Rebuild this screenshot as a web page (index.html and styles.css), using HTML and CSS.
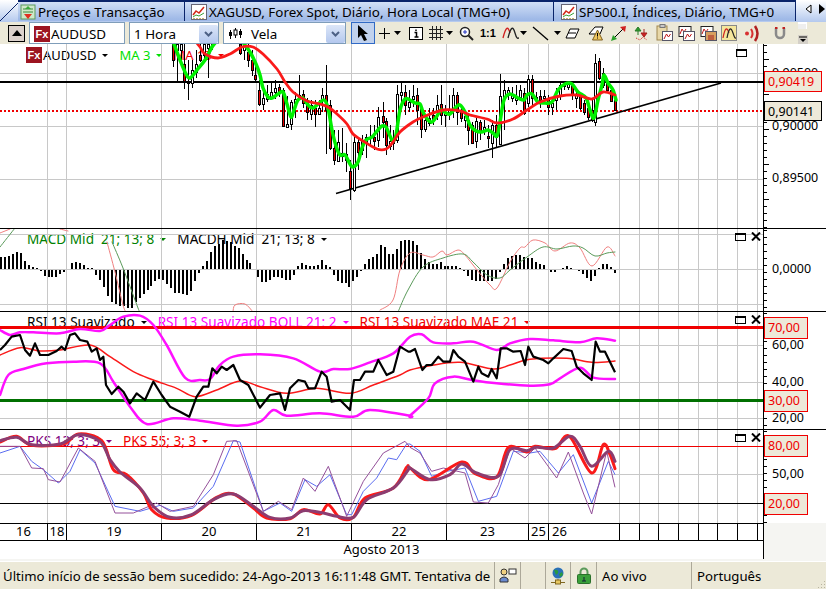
FILE: index.html
```html
<!DOCTYPE html>
<html lang="en">
<head>
  <meta charset="UTF-8">
  <title>AUDUSD</title>
  <link rel="stylesheet" href="styles.css">
</head>
<body>
  <!-- Tabs -->
  <div class="tabs">
    <svg class="tab-corner" width="19" height="22"><path d="M0 21 L19 2" stroke="#0a246a" fill="none"/></svg>
    <div class="tab tab-prices">
      <svg width="16" height="16" viewBox="0 0 16 16"><rect x="1" y="1" width="14" height="14" fill="#cfe8c8" stroke="#5c9a5c"/><path d="M3 5h10M3 8h10" stroke="#3c8c3c"/><path d="M8 2l3 3H5z" fill="#3cab3c"/><path d="M8 15l4-5H4z" fill="#e03020"/></svg>
      Preços e Transacção
    </div>
    <div class="tab tab-xag">
      <svg width="16" height="16" viewBox="0 0 16 16"><rect x="0.5" y="0.5" width="15" height="15" fill="#fff" stroke="#667"/><path d="M2 11l3-4 3 2 5-6" fill="none" stroke="#d02818" stroke-width="1.5"/><path d="M2 13l3-2 3 1 5-3" fill="none" stroke="#38a038"/><path d="M2 14.5h12" stroke="#c8b070" stroke-dasharray="2 1"/></svg>
      XAGUSD, Forex Spot, Diário, Hora Local (TMG+0)
    </div>
    <div class="tab tab-sp">
      <svg width="16" height="16" viewBox="0 0 16 16"><rect x="0.5" y="0.5" width="15" height="15" fill="#fff" stroke="#667"/><path d="M2 11l3-4 3 2 5-6" fill="none" stroke="#d02818" stroke-width="1.5"/><path d="M2 13l3-2 3 1 5-3" fill="none" stroke="#38a038"/><path d="M2 14.5h12" stroke="#c8b070" stroke-dasharray="2 1"/></svg>
      SP500.I, Índices, Diário, TMG+0
    </div>
    <div class="tab-arrows">
      <svg width="29" height="20" viewBox="0 0 29 20"><path d="M15 5v8l-5-4z" fill="#fff" stroke="#000"/><path d="M23 4l6 5-6 5z" fill="#000"/></svg>
    </div>
  </div>

  <!-- Toolbar -->
  <div class="toolbar">
    <button class="collapse"><svg width="10" height="6"><path d="M0 6L5 0l5 6z" fill="#000"/></svg></button>
    <div class="field symbol-field"><span class="fx">Fx</span>AUDUSD</div>
    <div class="field hour-field">1 Hora<span class="drop"><svg width="9" height="6"><path d="M1 1l3.5 3.5L8 1" fill="none" stroke="#4d6185" stroke-width="2"/></svg></span></div>
    <div class="field type-field">
      <svg width="16" height="12" viewBox="0 0 16 12"><path d="M2.5 2v9M7.5 0v10M12.5 1v9" stroke="#000"/><rect x="1" y="4" width="3" height="4" fill="#000"/><rect x="6" y="2" width="3" height="5" fill="#fff" stroke="#000"/><rect x="11" y="3" width="3" height="4" fill="#000"/></svg>
      <span class="type-label">Vela</span>
      <span class="drop"><svg width="9" height="6"><path d="M1 1l3.5 3.5L8 1" fill="none" stroke="#4d6185" stroke-width="2"/></svg></span>
    </div>
    <button class="tool-active"><svg width="14" height="18" viewBox="0 0 14 18"><path d="M2 1v13l3-3 3 6 3-1-3-6h4z" fill="#000"/></svg></button>
    <div class="tools">
      <svg class="plus" width="13" height="13"><path d="M6.5 1v11M1 6.5h11" stroke="#000"/></svg>
      <svg class="caret" width="7" height="4"><path d="M0 0h7L3.5 4z"/></svg>
      <svg class="info" width="14" height="13"><rect x=".5" y=".5" width="13" height="12" fill="#fff" stroke="#000"/><path d="M7 2.5v1.5M5.5 5.5H7.5v4.500M5.500 10h4" stroke="#000" stroke-width="1.5" fill="none"/></svg>
      <svg class="grid-icon" width="14" height="14"><path d="M3.5 0v14M7.5 0v14M11.5 0v14M0 3.5h14M0 7.5h14M0 11.5h14" stroke="#222"/></svg>
      <svg class="caret" width="7" height="4"><path d="M0 0h7L3.5 4z"/></svg>
      <svg class="mag" width="15" height="15"><circle cx="6" cy="6" r="4.5" fill="#fff" stroke="#222" stroke-width="1.5"/><path d="M4 6h4M6 4v4" stroke="#2030c0"/><path d="M9.500 9.500l4.500 4.500" stroke="#222" stroke-width="2"/></svg>
      <span class="one-to-one">1:1</span>
      <svg class="wave" width="18" height="14" viewBox="0 0 18 14"><path d="M1 12C4 0 6 0 8 7" fill="none" stroke="#d02020" stroke-width="1.300"/><path d="M6 12C9 0 11 0 13 7S16 12 17 12" fill="none" stroke="#222" stroke-width="1.300"/></svg>
      <svg class="caret caret-tight" width="7" height="4"><path d="M0 0h7L3.5 4z"/></svg>
      <svg class="line-icon" width="17" height="15"><path d="M1 1l15 13" stroke="#000" stroke-width="1.300"/></svg>
      <svg class="caret caret-wide" width="7" height="4"><path d="M0 0h7L3.5 4z"/></svg>
      <svg class="eraser" width="15" height="11"><path d="M5 1h9l-4 9H1zM3 5h8" fill="#fff" stroke="#000"/></svg>
      <svg class="warn" width="17" height="16"><path d="M1 9l6-7h8l-3 7z" fill="#fff" stroke="#000"/><path d="M9.500 5l5 10h-10z" fill="#f0c860" stroke="#806020"/><path d="M9.500 8v3.500M9.500 12.500v1" stroke="#000"/></svg>
      <svg class="arrows" width="15" height="15"><path d="M3 12L12 3" stroke="#000"/><path d="M0 15l2-6 4 4z" fill="#2aa02a"/><path d="M15 0l-6 1 5 5z" fill="#d02020"/></svg>
      <svg class="sort" width="15" height="15"><path d="M4 1l-3 4h6zM4 5v4" fill="#2a9a2a" stroke="#2a7a2a"/><path d="M10 11l-3-4h6zM10 3v4" fill="#d02020" stroke="#a02020"/><path d="M2 12l4 2 3-3 4 3" fill="none" stroke="#d02020" stroke-dasharray="1 1"/></svg>
      <svg class="clip clip-first" width="17" height="18"><rect x="1" y="2" width="10" height="14" fill="#e8d8a8" stroke="#a08850"/><rect x="4" y="0.500" width="5" height="3" fill="#c8c8c8" stroke="#777"/><rect x="6.500" y="7.500" width="10" height="9" fill="#fff" stroke="#556"/><path d="M8 15l2.500-5 2 3 2-3" fill="none" stroke="#c01818"/></svg>
      <svg class="clip" width="17" height="18"><rect x="1" y="2.500" width="12" height="10" fill="#fff" stroke="#222"/><path d="M2 10l2-5 2 3 2-3" fill="none" stroke="#c01818"/><rect x="5.500" y="7.500" width="11" height="9" fill="#fff" stroke="#556"/><path d="M7 15l2.500-5 2 3 2-3" fill="none" stroke="#c01818"/></svg>
      <svg class="clip" width="17" height="18"><rect x="1" y="2.500" width="12" height="10" fill="#fff" stroke="#222"/><path d="M2 10l2-5 2 3 2-3" fill="none" stroke="#c01818"/><rect x="5.500" y="7.500" width="11" height="9" fill="#d8a060" stroke="#556"/><path d="M8 11h6v5H8z" fill="#c06040"/></svg>
      <span class="wave-on"><svg width="14" height="12" viewBox="0 0 14 12"><path d="M1 11C3 0 5 0 7 6" fill="none" stroke="#d02020" stroke-width="1.200"/><path d="M5 11C7 0 9 0 11 6S13 11 14 11" fill="none" stroke="#222" stroke-width="1.200"/></svg></span>
      <svg class="signal" width="16" height="17"><circle cx="3" cy="8.500" r="2" fill="#d83030"/><path d="M7 4q3 4.500 0 9" fill="none" stroke="#d83030" stroke-width="2"/><path d="M11 1q5 7.500 0 15" fill="none" stroke="#b02020" stroke-width="2.500"/></svg>
      <svg class="magnet" width="12" height="13"><path d="M2 1v6a4 4 0 0 0 8 0V1" fill="none" stroke="#8a8a8a" stroke-width="2.500"/><path d="M1 1h2.500M8.500 1H11" stroke="#c02020" stroke-width="2"/></svg>
      <svg class="more" width="10" height="22"><path d="M0 0h9v7H0z" fill="#fff"/><path d="M1 2v5M3 2v5M5 2v5M7 2v5" stroke="#ddd"/><rect y="13" width="10" height="9" fill="#d4d0c8"/><path d="M1 15h8" stroke="#000"/><path d="M2 17h6l-3 3z"/></svg>
    </div>
  </div>

  <!-- Chart panes -->
  <div class="pane price-pane">
    <div class="plot">
      <div class="legend">
        <span class="fx fx-small">Fx</span><span class="leg-black">AUDUSD</span><i class="leg-caret leg-black"></i>
        <span class="leg-green">MA 3</span><i class="leg-caret leg-green"></i>
        <span class="leg-red">MA 13</span><i class="leg-caret leg-red"></i>
      </div>
      <svg class="draw" id="price" data-top="44" width="763" height="184"></svg>
      <span class="win-max"></span>
    </div>
    <div class="axis">
      <svg class="ticks" data-top="44" width="63" height="184"></svg>
      <span class="ax ax-89500">0,89500</span>
      <span class="ax ax-90000">0,90000</span>
      <span class="ax ax-90500">0,90500</span>
      <span class="box box-red box-90419">0,90419</span>
      <span class="box box-90141">0,90141</span>
    </div>
  </div>

  <div class="pane macd-pane">
    <div class="plot">
      <div class="legend">
        <span class="leg-macd">MACD Mid&nbsp; 21; 13; 8</span><i class="leg-caret leg-dkgreen"></i>
        <span class="leg-black">MACDH Mid&nbsp; 21; 13; 8</span><i class="leg-caret leg-black"></i>
      </div>
      <svg class="draw" id="macd" data-top="229" width="763" height="82"></svg>
      <span class="win-max"></span>
      <svg class="win-close" width="10" height="9"><path d="M1 0.500l8 8M9 0.500l-8 8" stroke="#000" stroke-width="2"/></svg>
    </div>
    <div class="axis">
      <svg class="ticks" data-top="229" width="63" height="82"></svg>
      <span class="ax ax-zero">0,0000</span>
    </div>
  </div>

  <div class="pane rsi-pane">
    <div class="plot">
      <div class="legend">
        <span class="leg-black">RSI 13 Suavizado</span><i class="leg-caret leg-black"></i>
        <span class="leg-pink">RSI 13 Suavizado BOLL 21; 2</span><i class="leg-caret leg-pink"></i>
        <span class="leg-red">RSI 13 Suavizado MAE 21</span><i class="leg-caret leg-red"></i>
      </div>
      <svg class="draw" id="rsi" data-top="312" width="763" height="117"></svg>
      <span class="win-max"></span>
      <svg class="win-close" width="10" height="9"><path d="M1 0.500l8 8M9 0.500l-8 8" stroke="#000" stroke-width="2"/></svg>
    </div>
    <div class="axis">
      <svg class="ticks" data-top="312" width="63" height="117"></svg>
      <span class="ax ax-60">60,00</span>
      <span class="ax ax-40">40,00</span>
      <span class="ax ax-20">20,00</span>
      <span class="box box-red box-short box-70">70,00</span>
      <span class="box box-red box-short box-30">30,00</span>
    </div>
  </div>

  <div class="pane pks-pane">
    <div class="plot">
      <div class="legend">
        <span class="leg-purple">PKS 13; 3; 3</span><i class="leg-caret leg-purple"></i>
        <span class="leg-red">PKS 55; 3; 3</span><i class="leg-caret leg-red"></i>
      </div>
      <svg class="draw" id="pks" data-top="430" width="763" height="93"></svg>
      <span class="win-max"></span>
      <svg class="win-close" width="10" height="9"><path d="M1 0.500l8 8M9 0.500l-8 8" stroke="#000" stroke-width="2"/></svg>
    </div>
    <div class="axis">
      <svg class="ticks" data-top="430" width="63" height="94"></svg>
      <span class="ax ax-50">50,00</span>
      <span class="box box-red box-short box-80">80,00</span>
      <span class="box box-red box-short box-20">20,00</span>
    </div>
  </div>

  <!-- Date scale -->
  <div class="dates">
    <div class="date-cells">
      <span class="w47">16</span><span class="w19">18</span><span class="w95">19</span><span class="w95">20</span><span class="w95">21</span><span class="w95">22</span><span class="w82">23</span><span class="w20">25</span><span class="w71 start">26</span><span class="w20"></span><span class="w19"></span><span class="w20"></span><span class="w20"></span><span class="w19"></span><span class="w20"></span><span class="w20"></span><span class="w5"></span>
    </div>
    <div class="month">Agosto 2013</div>
  </div>

  <!-- Status bar -->
  <div class="status">
    <div class="st st-msg">Último início de sessão bem sucedido: 24-Ago-2013 16:11:48 GMT. Tentativa de</div>
    <div class="st st-user">
      <svg width="18" height="15" viewBox="0 0 18 15"><circle cx="5" cy="4" r="3" fill="#f0d080" stroke="#333"/><path d="M1 14v-3q4-4 8 0v3z" fill="#6a8ad0" stroke="#333"/><rect x="10" y="1" width="7" height="5" fill="#fff" stroke="#333"/></svg>
    </div>
    <div class="st st-empty"></div>
    <div class="st st-net">
      <svg width="16" height="18" viewBox="0 0 16 18"><circle cx="8" cy="6" r="5.500" fill="#2a70b8"/><path d="M4 3q3-1 4 1t-2 4zM9 7l3-2 1 3-3 2z" fill="#2a9a40"/><path d="M8 12v3M1 15.500h14" stroke="#806820"/><rect x="5.500" y="13" width="5" height="4" fill="#e8c860" stroke="#806820"/></svg>
    </div>
    <div class="st st-lock">
      <svg width="14" height="17" viewBox="0 0 14 17"><path d="M3.500 8V5a3.500 3.500 0 0 1 7 0v3" fill="none" stroke="#5a9a5a" stroke-width="2"/><rect x="0.500" y="7.500" width="13" height="9" rx="1" fill="#3aa03a" stroke="#2a702a"/><path d="M7 10v4M5 14h4" stroke="#123"/></svg>
    </div>
    <div class="st st-live">Ao vivo</div>
    <div class="st st-lang">Português</div>
    <svg class="grip" width="10" height="10"><path d="M8 2h1v1H8zM5 5h1v1H5zM8 5h1v1H8zM2 8h1v1H2zM5 8h1v1H5zM8 8h1v1H8z" fill="#b8b4a0"/></svg>
  </div>

  <script src="chart.js"></script>
</body>
</html>
```

FILE: styles.css
```css
/* Basic styling */
html, body {
  margin: 0;
  height: 100%;
  overflow: hidden;
}

body {
  width: 826px;
  height: 589px;
  background: #f5f5f2;
  font-family: "Noto Sans", sans-serif;
  font-size: 13px;
  color: #000;
}

svg {
  display: block;
  flex: none;
}

/* Tabs */
.tabs {
  display: flex;
  height: 22px;
  background: linear-gradient(#ffffff, #b4c9ee);
}

.tab-corner {
  margin-right: -1px;
}

.tab {
  display: flex;
  align-items: center;
  gap: 2px;
  box-sizing: border-box;
  height: 21px;
  border-top: 2px solid #0a246a;
  border-right: 1px solid #0a246a;
  background: linear-gradient(#d2e0f6, #9fb9e7 90%);
  white-space: nowrap;
  font-size: 13.4px;
  padding-left: 2px;
}

.tab-prices { width: 167px; }
.tab-xag { width: 369px; padding-left: 6px; }
.tab-sp { width: 242px; padding-left: 7px; }

.tab-arrows {
  flex: 1;
}

/* Toolbar */
.toolbar {
  display: flex;
  align-items: center;
  height: 22px;
  background: #ece9d8;
  padding-left: 8px;
}

.collapse {
  display: flex;
  align-items: center;
  justify-content: center;
  box-sizing: border-box;
  width: 17px;
  height: 17px;
  padding: 0;
  margin-right: 4px;
  background: #dcd2cc;
  border: 1px solid #000;
}

.field {
  display: flex;
  align-items: center;
  box-sizing: border-box;
  height: 22px;
  background: #fff;
  border: 1px solid #7f9db9;
  font-size: 13.4px;
  padding-top: 1px;
}

.symbol-field { width: 96px; padding-left: 4px; }
.hour-field { width: 90px; margin-left: 4px; padding-left: 4px; }
.type-field { width: 123px; margin-left: 4px; padding-left: 4px; }

.type-label {
  margin-left: 7px;
}

.drop {
  display: flex;
  align-items: center;
  justify-content: center;
  width: 19px;
  height: 18px;
  margin-left: auto;
  background: linear-gradient(#dce6f8, #b4c8ee);
  border-radius: 2px;
}

.fx {
  display: inline-block;
  flex: none;
  width: 16px;
  height: 16px;
  margin-right: 1px;
  background: #9c1420;
  color: #fff;
  font-family: "Liberation Sans", sans-serif;
  font-size: 11px;
  font-weight: bold;
  line-height: 16px;
  text-align: center;
}

.tool-active {
  display: flex;
  align-items: center;
  justify-content: center;
  box-sizing: border-box;
  width: 24px;
  height: 22px;
  padding: 0;
  margin-left: 5px;
  background: #c1d2ee;
  border: 1px solid #316ac5;
}

.tools {
  display: flex;
  align-items: center;
  height: 22px;
}

.caret { fill: #000; margin-left: 3px; }
.caret-tight { margin-left: 0; }
.caret-wide { margin-left: 5px; }
.plus { margin-left: 3px; }
.info { margin-left: 8px; }
.grid-icon { margin-left: 6px; }
.mag { margin-left: 6px; }
.one-to-one { margin-left: 6px; font-family: "Liberation Sans", sans-serif; font-size: 11px; font-weight: bold; }
.wave { margin-left: 6px; }
.line-icon { margin-left: 5px; }
.eraser { margin-left: 4px; }
.warn { margin-left: 8px; }
.arrows { margin-left: 6px; }
.sort { margin-left: 8px; }
.clip { margin-left: 5px; }
.clip-first { margin-left: 7px; }
.wave-on {
  display: flex;
  align-items: center;
  justify-content: center;
  box-sizing: border-box;
  width: 16px;
  height: 16px;
  margin-left: 4px;
  background: #f4e69c;
  border: 1px solid #888;
}
.signal { margin-left: 7px; }
.magnet { margin-left: 14px; }
.more { margin-left: 12px; }

/* Panes */
.pane {
  display: flex;
  background: #fff;
  border-bottom: 1px solid #000;
}

.price-pane { height: 184px; }
.macd-pane { height: 82px; }
.rsi-pane { height: 117px; }
.pks-pane { height: 93px; border-bottom: none; }

.plot {
  position: relative;
  width: 763px;
}

.pks-pane .plot {
  border-bottom: 1px solid #000;
  height: 93px;
}

.draw {
  position: absolute;
  top: 0;
  left: 0;
}

.axis {
  position: relative;
  flex: 1;
  border-left: 1px solid #000;
  font-size: 12.5px;
}

.ticks {
  position: absolute;
  top: 0;
  left: 0;
}

/* Legends sit under the plotted lines */
.legend {
  position: absolute;
  top: 0;
  left: 27px;
  display: flex;
  align-items: center;
  white-space: nowrap;
  font-size: 13.6px;
}

.price-pane .legend { left: 26px; top: 2px; font-size: 13px; }
.pks-pane .legend { top: 1px; }

.fx-small { margin-right: 1px; }

.leg-black { color: #000; }
.leg-green { color: #00e000; }
.leg-red { color: #f00000; }
.leg-pink { color: #ff00ff; }
.leg-purple { color: #800080; }
.leg-macd { color: #008000; }
.leg-dkgreen { color: #008000; }

.leg-caret {
  flex: none;
  width: 0;
  height: 0;
  margin: 1px 11px 0 6px;
  border-left: 3px solid transparent;
  border-right: 3px solid transparent;
  border-top: 3px solid currentColor;
}

.win-max {
  position: absolute;
  top: 4px;
  left: 735px;
  box-sizing: border-box;
  width: 11px;
  height: 8px;
  border: 1px solid #000;
  border-top-width: 2px;
}

.price-pane .win-max { top: 5px; left: 736px; }

.win-close {
  position: absolute;
  top: 3px;
  left: 751px;
}

.ax {
  position: absolute;
  left: 8px;
  line-height: 16px;
  color: #000;
}

.box {
  position: absolute;
  left: 0;
  box-sizing: border-box;
  width: 58px;
  height: 21px;
  padding-left: 3px;
  background: #ede9d9;
  border: 1px solid #000;
  line-height: 19px;
}

.box-red {
  border-color: #f00000;
  color: #f00000;
}

.box-short { width: 44px; height: 22px; line-height: 20px; }

.ax-90500 { top: 21px; }
.ax-90000 { top: 74px; }
.ax-89500 { top: 126px; }
.box-90419 { top: 27px; }
.box-90141 { top: 57px; height: 20px; }
.ax-zero { top: 32px; }
.ax-60 { top: 25px; }
.ax-40 { top: 62px; }
.ax-20 { top: 98px; }
.box-70 { top: 5px; }
.box-30 { top: 78px; }
.ax-50 { top: 36px; }
.box-80 { top: 5px; }
.box-20 { top: 63px; }

/* Date scale */
.dates {
  box-sizing: border-box;
  width: 764px;
  border-right: 1px solid #000;
  background: #fff;
}

.date-cells {
  display: flex;
  box-sizing: border-box;
  height: 18px;
  border-bottom: 1px solid #000;
}

.date-cells span {
  flex: none;
  box-sizing: border-box;
  border-right: 1px solid #000;
  text-align: center;
  line-height: 17px;
}

.date-cells .start {
  text-align: left;
  padding-left: 3px;
}

.date-cells .w5 { width: 6px; border-right: none; }
.w19 { width: 19px; }
.w20 { width: 20px; }
.w47 { width: 48px; }
.w71 { width: 71px; }
.w82 { width: 82px; }
.w95 { width: 95px; }

.month {
  height: 18px;
  line-height: 17px;
  text-align: center;
}

/* Status bar */
.status {
  position: relative;
  display: flex;
  box-sizing: border-box;
  height: 28px;
  margin-top: 2px;
  border-top: 1px solid #fff;
  background: #ece9d8;
  font-size: 13.2px;
}

.st {
  display: flex;
  align-items: center;
  box-sizing: border-box;
  height: 27px;
  border-right: 1px solid #aca899;
  white-space: nowrap;
  overflow: hidden;
}

.st-msg { width: 495px; padding-left: 3px; }
.st-user { width: 26px; padding-left: 4px; }
.st-empty { width: 25px; }
.st-net { width: 25px; padding-left: 4px; }
.st-lock { width: 26px; padding-left: 6px; }
.st-live { width: 95px; padding-left: 5px; }
.st-lang { padding-left: 5px; border-right: none; }

.grip {
  position: absolute;
  right: 0;
  bottom: 0;
}
```

FILE: chart.js
```js
// Chart drawing. Traced values are in 3x crop coordinates, see trace().
const GREEN = '#00f000';
const RED = '#fa1a1a';
const PINK = '#ff10ff';
const GRID_X = [47, 66, 161, 256, 351, 446, 528, 548, 619, 639, 658, 678, 698, 717, 737, 757];

function trace(ox, oy, list) {
  const pts = [];
  for (let i = 0; i < list.length; i += 2) {
    pts.push([ox + list[i] / 3, oy + list[i + 1] / 3]);
  }
  return pts;
}

function add(svg, name, attrs) {
  const el = document.createElementNS('http://www.w3.org/2000/svg', name);
  for (const key in attrs) el.setAttribute(key, attrs[key]);
  svg.appendChild(el);
  return el;
}

function line(svg, pts, color, width) {
  add(svg, 'polyline', {
    points: pts.map(p => p.join(',')).join(' '),
    fill: 'none', stroke: color, 'stroke-width': width, 'stroke-linejoin': 'round'
  });
}

// Smooth line through the points (Catmull-Rom to bezier)
function curve(svg, pts, color, width) {
  let d = `M${pts[0][0]} ${pts[0][1]}`;
  for (let i = 0; i < pts.length - 1; i++) {
    const p0 = pts[i - 1] || pts[i];
    const p1 = pts[i];
    const p2 = pts[i + 1];
    const p3 = pts[i + 2] || p2;
    const c1x = p1[0] + (p2[0] - p0[0]) / 6;
    const c1y = p1[1] + (p2[1] - p0[1]) / 6;
    const c2x = p2[0] - (p3[0] - p1[0]) / 6;
    const c2y = p2[1] - (p3[1] - p1[1]) / 6;
    d += ` C${c1x} ${c1y} ${c2x} ${c2y} ${p2[0]} ${p2[1]}`;
  }
  add(svg, 'path', { d: d, fill: 'none', stroke: color, 'stroke-width': width, 'stroke-linecap': 'round' });
}

function hline(svg, y, color, width, dash) {
  const attrs = { x1: 0, x2: 763, y1: y, y2: y, stroke: color, 'stroke-width': width, 'shape-rendering': 'crispEdges' };
  if (dash) attrs['stroke-dasharray'] = dash;
  add(svg, 'line', attrs);
}

function setup(id, gridY) {
  const svg = document.getElementById(id);
  const top = +svg.dataset.top;
  svg.setAttribute('viewBox', `0 ${top} 763 ${svg.getAttribute('height')}`);
  GRID_X.forEach(x => add(svg, 'line', { x1: x + 0.5, x2: x + 0.5, y1: top, y2: 530, stroke: '#c8c8c8', 'shape-rendering': 'crispEdges' }));
  gridY.forEach(y => hline(svg, y + 0.5, '#c8c8c8', 1));
  return svg;
}

// x, high, low, top of body, bottom of body, red?
const CANDLES = [
  [173,30,67,40,60,1],[177,40,81,44,50,0],[181,30,60,44,50,0],[184,44,89,64,81,1],[188,60,100,82,83,0],[192,60,88,70,83,0],
  [196,50,78,64,72,0],[200,40,62,55,60,1],[204,40,60,44,55,0],[208,40,78,44,48,0],[212,40,50,40,44,0],[240,40,55,44,53,1],
  [244,40,60,44,50,0],[248,44,67,52,60,1],[252,50,76,60,70,1],[255,65,82,75,79,1],[259,80,106,90,104,1],[263,88,110,98,104,0],
  [267,85,102,94,99,0],[271,83,100,92,98,0],[275,80,99,88,92,0],[279,84,97,87,92,1],[283,88,127,90,126,1],[287,96,128,124,127,0],
  [291,100,130,102,124,0],[295,92,118,99,103,0],[299,75,100,95,99,0],[303,90,108,94,103,1],[307,98,120,100,112,1],[311,100,120,105,114,0],
  [315,100,127,108,114,1],[319,100,114,108,114,0],[322,88,112,95,100,0],[326,65,154,95,110,1],[330,100,150,105,148,1],[334,130,165,148,160,1],
  [338,130,161,142,161,0],[342,128,162,153,156,0],[346,143,172,154,160,1],[350,160,200,171,188,1],[354,135,192,142,190,0],[358,138,170,142,152,1],
  [362,135,155,141,150,0],[366,134,158,137,142,0],[370,125,145,137,138,0],[374,125,150,137,141,1],[378,107,147,117,140,0],[383,102,138,116,122,1],
  [386,118,155,121,145,1],[390,125,150,141,146,0],[393,130,150,140,143,0],[397,85,143,94,140,0],[401,83,105,92,95,0],[405,85,115,92,105,1],
  [409,90,112,102,107,0],[413,85,107,96,99,0],[417,88,125,95,110,1],[421,105,138,108,129,1],[425,118,132,120,129,0],[429,108,126,118,123,0],
  [433,108,125,115,120,1],[437,95,120,105,112,0],[441,85,125,104,115,1],[445,105,127,112,115,0],[449,95,120,110,112,0],[453,88,118,95,110,0],
  [457,92,125,95,112,1],[461,105,122,110,118,1],[465,112,128,116,120,0],[468,115,145,120,130,1],[472,122,143,125,143,1],[476,118,148,121,141,0],
  [480,120,140,122,132,1],[484,120,135,127,130,0],[488,125,148,136,138,1],[492,120,158,125,143,0],[496,115,148,125,137,1],[500,74,145,96,144,0],
  [504,80,130,90,97,0],[508,87,100,90,95,0],[512,87,102,95,98,0],[516,85,105,98,100,0],[520,85,100,90,97,0],[524,88,115,93,113,1],
  [528,75,107,79,103,0],[532,75,105,79,98,1],[536,92,105,97,100,0],[540,90,108,96,100,1],[544,90,102,96,98,0],[548,95,115,98,107,1],
  [552,100,115,103,107,0],[556,88,110,95,100,0],[560,82,100,85,95,0],[564,81,90,84,86,0],[568,82,90,84,87,0],[572,82,100,85,95,1],
  [576,88,108,95,98,0],[580,92,110,95,108,1],[584,100,115,103,112,1],[588,104,120,108,117,1],[592,100,122,110,120,1],[595,54,126,63,122,0],
  [599,58,80,61,78,1],[603,68,88,73,85,1],[607,80,92,83,90,1],[611,88,102,90,101,1],[615,98,111,100,110,1]
];

const MA3_TOP = [[174,44],[180,60],[186,74],[190,78],[197,70],[205,60],[212,47],[216,42]];
const MA3 = [[244,44],[250,52],[256,64],[260,75],[263,88],[268,97],[272,98],[278,94],[283,92],[287,104],[291,117],[294,110],[298,100],[303,98],[308,105],[313,108],[318,104],[324,100],[328,108],[332,130],[336,146],[340,155],[345,155],[350,164],[353,167],[358,162],[362,148],[366,140],[372,137],[378,130],[382,126],[386,127],[390,136],[393,141],[396,135],[400,110],[405,99],[410,100],[415,103],[420,104],[423,112],[428,120],[432,122],[437,116],[441,110],[446,113],[450,114],[456,107],[460,105],[465,112],[470,125],[476,131],[482,132],[488,130],[493,133],[497,136],[500,122],[504,100],[510,94],[518,98],[524,100],[527,95],[532,94],[538,102],[545,103],[552,102],[558,90],[565,84],[572,84],[578,92],[586,98],[590,110],[594,118],[598,100],[602,85],[604,75],[608,83],[613,90],[616,100]];
const MA13 = [[196,42],[200,47],[205,54],[218,58],[230,54],[242,47],[253,47],[263,54],[277,69],[285,82],[293,92],[307,101],[320,104],[328,107],[337,114],[347,124],[353,134],[363,141],[377,149],[386,149],[393,142],[400,132],[413,122],[423,117],[443,110],[460,111],[470,115],[487,119],[497,123],[513,119],[527,110],[540,102],[560,96],[577,95],[592,99],[603,92],[615,95]];

// MACDH heights, one bar every 3.96px from x=0
const BARS = [12,12,13,15,17,16,8,4,2,1,-1,-6,-7,-7,-7,-4,-2,0,6,7,6,4,1,1,-5,-10,-17,-26,-32,-34,-36,-36,-38,-38,-32,-28,-24,-20,-16,-11,-9,-10,-14,-18,-23,-23,-24,-25,-21,-11,-3,3,8,17,23,25,29,28,27,23,21,15,9,6,0,-7,-12,-12,-10,-7,-7,-8,-10,-10,-5,3,6,4,3,3,4,9,4,2,-5,-11,-13,-13,-17,-11,-7,-1,5,10,12,15,24,22,15,15,20,28,29,29,28,24,16,10,7,5,5,7,3,3,3,3,1,-1,-6,-10,-11,-11,-11,-11,-11,-9,-2,5,11,13,14,14,12,11,11,7,5,4,0,-2,-2,0,1,3,1,0,-1,-4,-8,-11,-6,1,5,5,2,-3];

function drawPrice() {
  const svg = setup('price', [73, 126, 179]);
  hline(svg, 82, '#000', 2);
  hline(svg, 111, '#f00000', 2, '2 2');
  add(svg, 'line', { x1: 336, y1: 193.5, x2: 721, y2: 83, stroke: '#000', 'stroke-width': 1.6 });
  CANDLES.forEach(c => {
    add(svg, 'line', { x1: c[0] + 0.5, x2: c[0] + 0.5, y1: c[1], y2: c[2], stroke: '#000', 'shape-rendering': 'crispEdges' });
    add(svg, 'rect', { x: c[0] - 0.5, y: c[3], width: 2, height: c[4] - c[3], fill: c[5] ? '#e80000' : '#fff', stroke: '#000', 'shape-rendering': 'crispEdges' });
  });
  curve(svg, MA3_TOP, GREEN, 3.5);
  curve(svg, MA3, GREEN, 3.5);
  curve(svg, MA13, RED, 2.8);
}

function drawMacd() {
  const svg = setup('macd', [234, 269, 304]);
  BARS.forEach((h, i) => {
    const x = i * 3.96;
    if (h === 0) return;
    add(svg, 'rect', { x: x, y: h > 0 ? 269 - h : 270, width: 2, height: Math.abs(h), fill: '#000', 'shape-rendering': 'crispEdges' });
  });
  const red = '#f08080', green = '#5a9a5a';
  curve(svg, [[0,233],[10,229]], red, 1);
  curve(svg, [[60,229],[68,231]], red, 1);
  curve(svg, [[107,242],[115,272],[123,305],[126,312]], red, 1);
  curve(svg, [[233,312],[235,305],[245,304],[253,312]], red, 1);
  curve(svg, [[380,310],[393,300],[400,270],[410,253],[423,255],[433,257],[442,251],[447,255],[458,250],[465,255],[477,270],[490,285],[497,288],[510,262],[520,248],[525,247],[533,240],[545,243],[555,251],[570,243],[580,248],[592,266],[607,247],[615,256]], red, 1);
  curve(svg, [[0,247],[15,228]], green, 1);
  curve(svg, [[112,242],[123,268],[138,308],[140,312]], green, 1);
  curve(svg, [[398,312],[408,290],[423,267],[443,258],[463,254],[473,262],[487,275],[500,278],[510,270],[527,257],[543,247],[557,249],[573,246],[583,248],[595,256],[607,253],[615,252]], green, 1);
}

function drawRsi() {
  const svg = setup('rsi', [345, 382, 418]);
  hline(svg, 327, '#f00000', 3);
  hline(svg, 400, '#007000', 3);
  const y0 = 225;
  const upper = trace(0, y0, [0,315,30,330,60,322,100,322,180,325,240,312,300,318,330,300,370,275,420,272,460,300,500,360,555,458,600,465,630,462,660,420,700,395,780,388,880,400,960,440,1000,432,1050,432,1110,412,1180,385,1230,335])
    .concat(trace(410, y0, [35,328,70,352,130,355,190,350,260,375,300,355,360,342,430,346,510,352,560,340,615,347]));
  const lower = trace(0, y0, [0,510,25,450,70,432,140,415,220,410,300,415,340,470,390,545,440,597,520,580,600,587,710,602,780,590,820,555,860,572,960,565,1060,575,1110,555,1230,572])
    .concat(trace(410, y0, [0,572,55,520,75,475,130,455,185,465,260,475,360,482,420,478,450,460,510,428,550,458,615,462]));
  const mae = trace(0, y0, [0,390,60,368,120,378,180,375,270,360,330,395,400,440,460,465,530,490,585,515,650,495,720,468,780,485,860,505,950,490,1050,505,1120,480,1200,450])
    .concat(trace(410, y0, [0,435,60,422,150,412,250,432,300,420,360,403,470,400,545,412,615,408]));
  const black = trace(0, y0, [0,375,15,360,35,335,60,330,75,375,90,392,105,355,120,390,145,390,170,378,185,365,195,375,210,330,225,325,240,345,262,350,275,380,290,370,300,405,310,395,318,480,335,507,355,485,370,500,390,535,410,505,435,525,460,470,485,510,510,545,540,560,568,575,590,515,610,485,625,485,637,430,650,445,665,425,680,435,700,420,720,465,745,480,780,548,810,510,840,505,855,555,870,490,895,465,915,470,925,490,945,490,965,440,980,455,995,530,1020,525,1050,555,1062,465,1080,465,1095,440,1120,440,1135,405,1160,450,1180,440,1200,365,1225,380])
    .concat(trace(410, y0, [0,380,15,372,37,435,50,420,65,420,85,395,100,410,120,410,130,375,145,395,165,410,190,470,205,425,215,445,235,455,245,432,260,460,272,370,290,370,310,380,332,378,345,420,355,365,370,395,400,405,415,415,430,400,460,372,485,378,500,425,520,445,545,465,557,350,570,380,585,380,615,442]));
  curve(svg, upper, PINK, 2.5);
  curve(svg, lower, PINK, 2.5);
  curve(svg, mae, RED, 1.5);
  line(svg, black, '#000', 2.2);
}

function drawPks() {
  const svg = setup('pks', [474]);
  hline(svg, 446.5, '#f00000', 1);
  hline(svg, 503.5, '#000', 1);
  const y0 = 428;
  const blue = trace(0, y0, [0,75,60,55,95,100,130,125,175,165,210,130,240,65,285,105,345,235,420,250,480,232,520,250,580,240,640,175,700,38,720,42,790,250,840,225,875,250,915,155,950,175,990,140,1040,260,1055,260,1090,190,1130,150,1165,90,1190,95,1220,48])
    .concat(trace(410, y0, [0,48,30,70,65,145,110,130,165,120,205,220,260,205,310,70,360,75,390,70,445,135,490,80,545,225,595,100,615,140]));
  const thin = trace(0, y0, [0,55,60,55,95,120,130,122,145,155,180,162,235,60,285,100,345,255,400,255,470,225,510,250,580,235,640,140,680,40,710,38,790,250,835,220,875,245,910,150,945,190,985,115,1040,265,1090,160,1150,75,1215,40])
    .concat(trace(410, y0, [0,58,30,75,65,130,100,120,165,135,190,222,235,225,265,170,300,60,345,90,375,60,440,150,475,72,520,195,545,258,590,70,615,178]));
  const red = trace(0, y0, [0,42,50,25,95,52,190,48,235,18,305,38,340,125,380,140,430,195,455,245,500,270,575,262,650,208,700,198,760,240,800,270,870,272,910,245,960,258,985,230,1020,270,1060,268,1095,210,1180,180,1220,118])
    .concat(trace(410, y0, [0,120,55,155,155,102,195,137,260,147,295,58,350,72,375,55,435,62,478,25,545,135,580,50,600,80,615,122]));
  const purple = trace(0, y0, [0,38,50,28,95,50,180,48,235,20,300,40,330,95,360,132,420,180,460,235,510,268,575,260,640,215,700,198,760,235,810,268,870,270,910,248,970,255,1010,265,1060,268,1100,215,1180,180,1225,125])
    .concat(trace(410, y0, [0,120,60,155,120,140,155,108,200,135,265,145,300,65,350,68,380,58,430,60,480,25,510,55,545,115,595,70,615,100]));
  line(svg, blue, '#5a6cf0', 1);
  line(svg, thin, '#94509a', 1);
  curve(svg, red, RED, 3);
  curve(svg, purple, '#8c3c70', 3);
}

// Small ticks on the value scales
function drawTicks() {
  document.querySelectorAll('.ticks').forEach(svg => {
    const top = +svg.dataset.top;
    const h = +svg.getAttribute('height');
    for (let y = 1; y < h; y += 7) {
      const major = (y + top) % 35 === 24;
      add(svg, 'line', { x1: 0, x2: major ? 5 : 3, y1: y + 0.5, y2: y + 0.5, stroke: '#000', 'shape-rendering': 'crispEdges' });
    }
  });
}

drawPrice();
drawMacd();
drawRsi();
drawPks();
drawTicks();
```
